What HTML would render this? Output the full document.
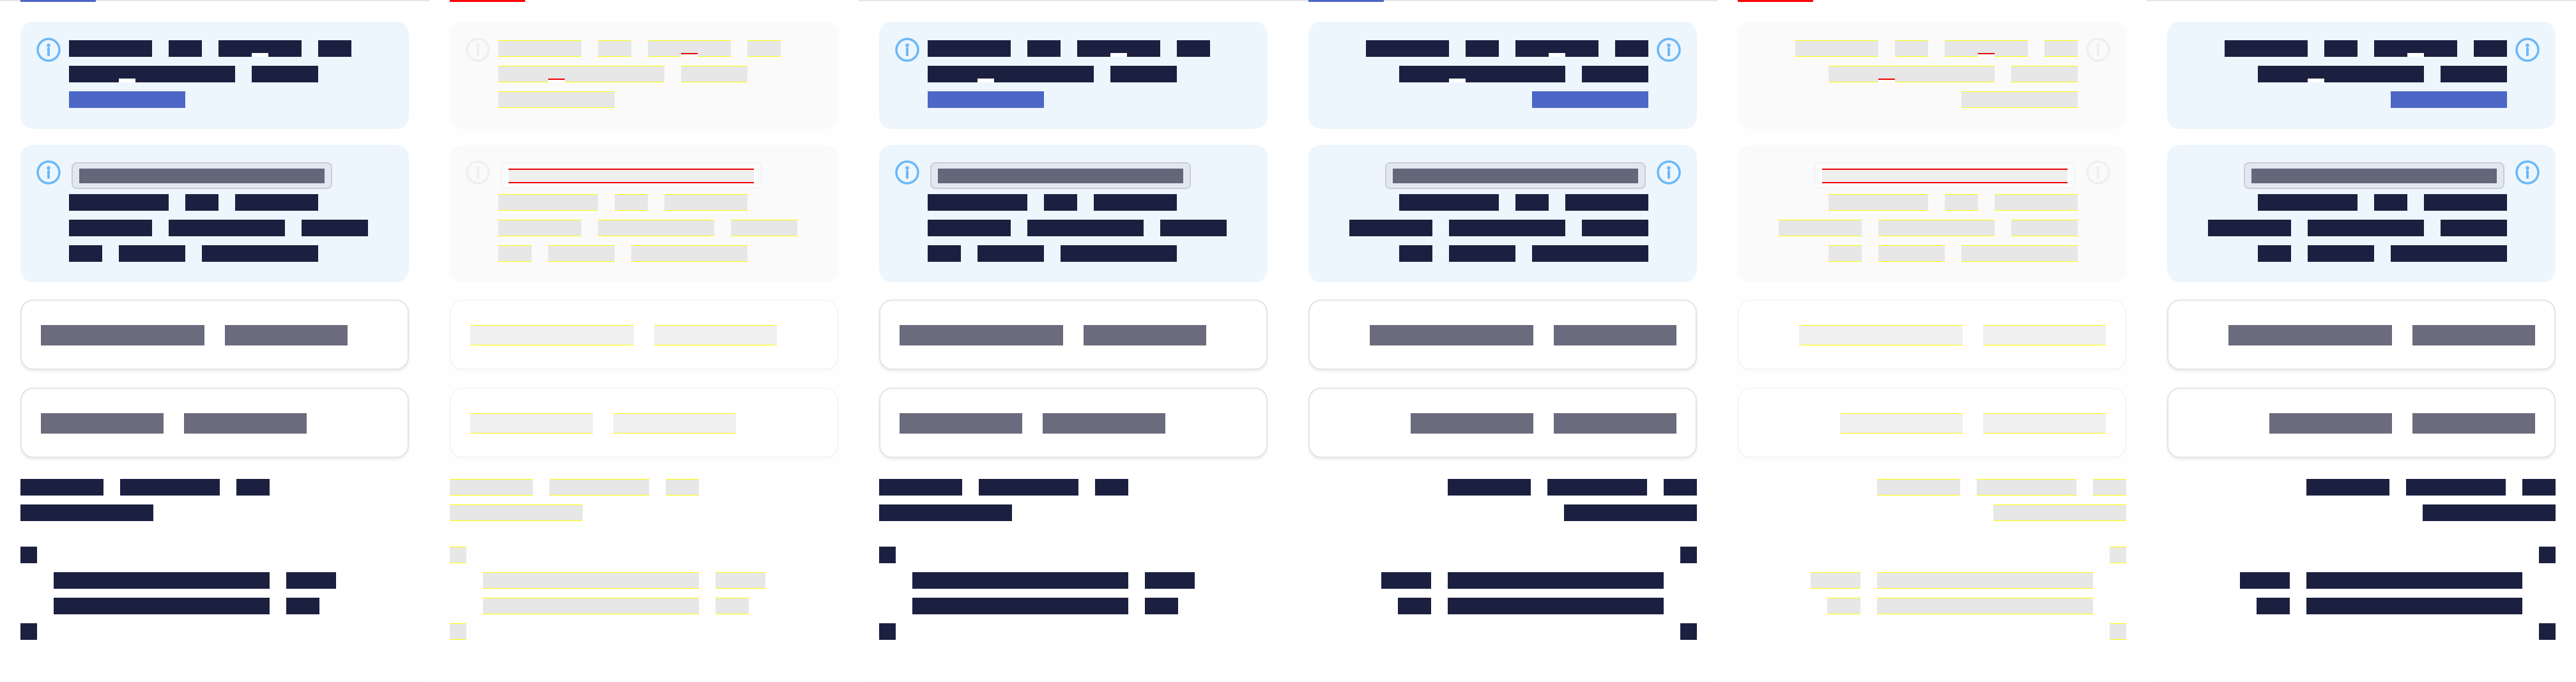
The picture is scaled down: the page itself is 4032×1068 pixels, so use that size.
<!DOCTYPE html>
<html><head><meta charset="utf-8"><style>
*{margin:0;padding:0;box-sizing:border-box}
body{width:4032px;height:1068px;background:#fff;position:relative;overflow:hidden;font-family:"Liberation Sans",sans-serif}
.p{position:absolute;top:0;width:672px;height:1068px;background:#fff;border-top:2px solid #e6e6e6}
.tab{position:absolute;left:32px;top:-2px;width:118px;height:3px;background:#4c67c6}
.box{position:absolute;left:32px;width:608px;background:#edf5fd;border-radius:20px}
.card{position:absolute;left:32px;width:608px;height:110px;background:#fff;border:2px solid #e4e4e4;border-radius:20px;box-shadow:0 3px 4px rgba(0,0,0,.08)}
.ic{position:absolute;left:57px;width:38px;height:38px}
.ln{position:absolute;left:var(--x);display:flex;gap:26px;height:26px}
.rtl .ln{left:auto;right:var(--x)}
.rtl .ln.rv{flex-direction:row-reverse}
.rtl .ic{left:auto;right:57px}
.b{display:block;height:26px;background:#1c2040}
.n{display:block;height:26px;width:26px;background:linear-gradient(#1c2040 0 20px,#fff 20px)}
.w{display:flex}
.bl{background:#4c67c6}
.pill{position:absolute;left:112px;top:252px;width:408px;height:42px;background:#e3e7ef;border:2px solid #c9cdd7;border-radius:8px}
.rtl .pill{left:auto;right:112px}
.pill i{position:absolute;left:10px;top:8px;width:384px;height:23px;background:#636779}
.cl{position:absolute;left:var(--x);display:flex;gap:32px}
.rtl .cl{left:auto;right:var(--x)}
.cb{display:block;height:32px;background:#6b6b7d}
.cs{stroke:#6ab8f7;fill:#6ab8f7}
.f{background:#fefefe;border-top:2px solid #fff}
.f .tab{background:#f00}
.f .box{background:#fafafa}
.f .b,.f .bl{background:#e7e7e7;border-top:1px solid #ff0;border-bottom:1px solid #ff0}
.f .n{background:linear-gradient(#e7e7e7 0 19px,#e00 19px 21px,#fdfdfd 21px);border-top:1px solid #ff0}
.f .pill{background:#fbfbfb;border-color:#f3f3f3}
.f .pill i{background:#efefef;border-top:2px solid #e00;border-bottom:2px solid #e00}
.f .card{border-color:#f6f6f6;box-shadow:0 3px 4px rgba(0,0,0,.02)}
.f .cb{background:#f0f0f0;border-top:1px solid #ff0;border-bottom:1px solid #ff0}
.f .cs{stroke:#efefef;fill:#efefef}
</style></head><body>

<div class="p" style="left:0">
<div class="tab"></div>
<div class="box" style="top:32px;height:168px"></div>
<svg class="ic" style="top:57px" viewBox="-19 -19 38 38"><circle class="cs" r="17" fill="none" stroke-width="3.5" style="fill:none"/><circle class="cs" cy="-7" r="2.4" stroke="none"/><line class="cs" y1="-2" y2="8" stroke-width="4" stroke-linecap="round"/></svg>
<div class="ln" style="--x:108px;top:61px"><i class="b" style="width:130px"></i><i class="b" style="width:52px"></i><span class="w"><i class="b" style="width:52px"></i><i class="n"></i><i class="b" style="width:52px"></i></span><i class="b" style="width:52px"></i></div>
<div class="ln" style="--x:108px;top:101px"><span class="w"><i class="b" style="width:78px"></i><i class="n"></i><i class="b" style="width:156px"></i></span><i class="b" style="width:104px"></i></div>
<div class="ln" style="--x:108px;top:141px"><i class="b bl" style="width:182px"></i></div>
<div class="box" style="top:225px;height:215px"></div>
<svg class="ic" style="top:249px" viewBox="-19 -19 38 38"><circle class="cs" r="17" fill="none" stroke-width="3.5" style="fill:none"/><circle class="cs" cy="-7" r="2.4" stroke="none"/><line class="cs" y1="-2" y2="8" stroke-width="4" stroke-linecap="round"/></svg>
<div class="pill"><i></i></div>
<div class="ln" style="--x:108px;top:302px"><i class="b" style="width:156px"></i><i class="b" style="width:52px"></i><i class="b" style="width:130px"></i></div>
<div class="ln" style="--x:108px;top:342px"><i class="b" style="width:130px"></i><i class="b" style="width:182px"></i><i class="b" style="width:104px"></i></div>
<div class="ln" style="--x:108px;top:382px"><i class="b" style="width:52px"></i><i class="b" style="width:104px"></i><i class="b" style="width:182px"></i></div>
<div class="card" style="top:467px"></div>
<div class="cl" style="--x:64px;top:507px"><i class="cb" style="width:256px"></i><i class="cb" style="width:192px"></i></div>
<div class="card" style="top:605px"></div>
<div class="cl" style="--x:64px;top:645px"><i class="cb" style="width:192px"></i><i class="cb" style="width:192px"></i></div>
<div class="ln" style="--x:32px;top:748px"><i class="b" style="width:130px"></i><i class="b" style="width:156px"></i><i class="b" style="width:52px"></i></div>
<div class="ln" style="--x:32px;top:788px"><i class="b" style="width:208px"></i></div>
<div class="ln" style="--x:32px;top:854px"><i class="b" style="width:26px"></i></div>
<div class="ln rv" style="--x:84px;top:894px"><i class="b" style="width:338px"></i><i class="b" style="width:78px"></i></div>
<div class="ln rv" style="--x:84px;top:934px"><i class="b" style="width:338px"></i><i class="b" style="width:52px"></i></div>
<div class="ln" style="--x:32px;top:974px"><i class="b" style="width:26px"></i></div>
</div>

<div class="p f" style="left:672px">
<div class="tab"></div>
<div class="box" style="top:32px;height:168px"></div>
<svg class="ic" style="top:57px" viewBox="-19 -19 38 38"><circle class="cs" r="17" fill="none" stroke-width="3.5" style="fill:none"/><circle class="cs" cy="-7" r="2.4" stroke="none"/><line class="cs" y1="-2" y2="8" stroke-width="4" stroke-linecap="round"/></svg>
<div class="ln" style="--x:108px;top:61px"><i class="b" style="width:130px"></i><i class="b" style="width:52px"></i><span class="w"><i class="b" style="width:52px"></i><i class="n"></i><i class="b" style="width:52px"></i></span><i class="b" style="width:52px"></i></div>
<div class="ln" style="--x:108px;top:101px"><span class="w"><i class="b" style="width:78px"></i><i class="n"></i><i class="b" style="width:156px"></i></span><i class="b" style="width:104px"></i></div>
<div class="ln" style="--x:108px;top:141px"><i class="b bl" style="width:182px"></i></div>
<div class="box" style="top:225px;height:215px"></div>
<svg class="ic" style="top:249px" viewBox="-19 -19 38 38"><circle class="cs" r="17" fill="none" stroke-width="3.5" style="fill:none"/><circle class="cs" cy="-7" r="2.4" stroke="none"/><line class="cs" y1="-2" y2="8" stroke-width="4" stroke-linecap="round"/></svg>
<div class="pill"><i></i></div>
<div class="ln" style="--x:108px;top:302px"><i class="b" style="width:156px"></i><i class="b" style="width:52px"></i><i class="b" style="width:130px"></i></div>
<div class="ln" style="--x:108px;top:342px"><i class="b" style="width:130px"></i><i class="b" style="width:182px"></i><i class="b" style="width:104px"></i></div>
<div class="ln" style="--x:108px;top:382px"><i class="b" style="width:52px"></i><i class="b" style="width:104px"></i><i class="b" style="width:182px"></i></div>
<div class="card" style="top:467px"></div>
<div class="cl" style="--x:64px;top:507px"><i class="cb" style="width:256px"></i><i class="cb" style="width:192px"></i></div>
<div class="card" style="top:605px"></div>
<div class="cl" style="--x:64px;top:645px"><i class="cb" style="width:192px"></i><i class="cb" style="width:192px"></i></div>
<div class="ln" style="--x:32px;top:748px"><i class="b" style="width:130px"></i><i class="b" style="width:156px"></i><i class="b" style="width:52px"></i></div>
<div class="ln" style="--x:32px;top:788px"><i class="b" style="width:208px"></i></div>
<div class="ln" style="--x:32px;top:854px"><i class="b" style="width:26px"></i></div>
<div class="ln rv" style="--x:84px;top:894px"><i class="b" style="width:338px"></i><i class="b" style="width:78px"></i></div>
<div class="ln rv" style="--x:84px;top:934px"><i class="b" style="width:338px"></i><i class="b" style="width:52px"></i></div>
<div class="ln" style="--x:32px;top:974px"><i class="b" style="width:26px"></i></div>
</div>

<div class="p" style="left:1344px">
<div class="box" style="top:32px;height:168px"></div>
<svg class="ic" style="top:57px" viewBox="-19 -19 38 38"><circle class="cs" r="17" fill="none" stroke-width="3.5" style="fill:none"/><circle class="cs" cy="-7" r="2.4" stroke="none"/><line class="cs" y1="-2" y2="8" stroke-width="4" stroke-linecap="round"/></svg>
<div class="ln" style="--x:108px;top:61px"><i class="b" style="width:130px"></i><i class="b" style="width:52px"></i><span class="w"><i class="b" style="width:52px"></i><i class="n"></i><i class="b" style="width:52px"></i></span><i class="b" style="width:52px"></i></div>
<div class="ln" style="--x:108px;top:101px"><span class="w"><i class="b" style="width:78px"></i><i class="n"></i><i class="b" style="width:156px"></i></span><i class="b" style="width:104px"></i></div>
<div class="ln" style="--x:108px;top:141px"><i class="b bl" style="width:182px"></i></div>
<div class="box" style="top:225px;height:215px"></div>
<svg class="ic" style="top:249px" viewBox="-19 -19 38 38"><circle class="cs" r="17" fill="none" stroke-width="3.5" style="fill:none"/><circle class="cs" cy="-7" r="2.4" stroke="none"/><line class="cs" y1="-2" y2="8" stroke-width="4" stroke-linecap="round"/></svg>
<div class="pill"><i></i></div>
<div class="ln" style="--x:108px;top:302px"><i class="b" style="width:156px"></i><i class="b" style="width:52px"></i><i class="b" style="width:130px"></i></div>
<div class="ln" style="--x:108px;top:342px"><i class="b" style="width:130px"></i><i class="b" style="width:182px"></i><i class="b" style="width:104px"></i></div>
<div class="ln" style="--x:108px;top:382px"><i class="b" style="width:52px"></i><i class="b" style="width:104px"></i><i class="b" style="width:182px"></i></div>
<div class="card" style="top:467px"></div>
<div class="cl" style="--x:64px;top:507px"><i class="cb" style="width:256px"></i><i class="cb" style="width:192px"></i></div>
<div class="card" style="top:605px"></div>
<div class="cl" style="--x:64px;top:645px"><i class="cb" style="width:192px"></i><i class="cb" style="width:192px"></i></div>
<div class="ln" style="--x:32px;top:748px"><i class="b" style="width:130px"></i><i class="b" style="width:156px"></i><i class="b" style="width:52px"></i></div>
<div class="ln" style="--x:32px;top:788px"><i class="b" style="width:208px"></i></div>
<div class="ln" style="--x:32px;top:854px"><i class="b" style="width:26px"></i></div>
<div class="ln rv" style="--x:84px;top:894px"><i class="b" style="width:338px"></i><i class="b" style="width:78px"></i></div>
<div class="ln rv" style="--x:84px;top:934px"><i class="b" style="width:338px"></i><i class="b" style="width:52px"></i></div>
<div class="ln" style="--x:32px;top:974px"><i class="b" style="width:26px"></i></div>
</div>

<div class="p rtl" style="left:2016px">
<div class="tab"></div>
<div class="box" style="top:32px;height:168px"></div>
<svg class="ic" style="top:57px" viewBox="-19 -19 38 38"><circle class="cs" r="17" fill="none" stroke-width="3.5" style="fill:none"/><circle class="cs" cy="-7" r="2.4" stroke="none"/><line class="cs" y1="-2" y2="8" stroke-width="4" stroke-linecap="round"/></svg>
<div class="ln" style="--x:108px;top:61px"><i class="b" style="width:130px"></i><i class="b" style="width:52px"></i><span class="w"><i class="b" style="width:52px"></i><i class="n"></i><i class="b" style="width:52px"></i></span><i class="b" style="width:52px"></i></div>
<div class="ln" style="--x:108px;top:101px"><span class="w"><i class="b" style="width:78px"></i><i class="n"></i><i class="b" style="width:156px"></i></span><i class="b" style="width:104px"></i></div>
<div class="ln" style="--x:108px;top:141px"><i class="b bl" style="width:182px"></i></div>
<div class="box" style="top:225px;height:215px"></div>
<svg class="ic" style="top:249px" viewBox="-19 -19 38 38"><circle class="cs" r="17" fill="none" stroke-width="3.5" style="fill:none"/><circle class="cs" cy="-7" r="2.4" stroke="none"/><line class="cs" y1="-2" y2="8" stroke-width="4" stroke-linecap="round"/></svg>
<div class="pill"><i></i></div>
<div class="ln" style="--x:108px;top:302px"><i class="b" style="width:156px"></i><i class="b" style="width:52px"></i><i class="b" style="width:130px"></i></div>
<div class="ln" style="--x:108px;top:342px"><i class="b" style="width:130px"></i><i class="b" style="width:182px"></i><i class="b" style="width:104px"></i></div>
<div class="ln" style="--x:108px;top:382px"><i class="b" style="width:52px"></i><i class="b" style="width:104px"></i><i class="b" style="width:182px"></i></div>
<div class="card" style="top:467px"></div>
<div class="cl" style="--x:64px;top:507px"><i class="cb" style="width:256px"></i><i class="cb" style="width:192px"></i></div>
<div class="card" style="top:605px"></div>
<div class="cl" style="--x:64px;top:645px"><i class="cb" style="width:192px"></i><i class="cb" style="width:192px"></i></div>
<div class="ln" style="--x:32px;top:748px"><i class="b" style="width:130px"></i><i class="b" style="width:156px"></i><i class="b" style="width:52px"></i></div>
<div class="ln" style="--x:32px;top:788px"><i class="b" style="width:208px"></i></div>
<div class="ln" style="--x:32px;top:854px"><i class="b" style="width:26px"></i></div>
<div class="ln rv" style="--x:84px;top:894px"><i class="b" style="width:338px"></i><i class="b" style="width:78px"></i></div>
<div class="ln rv" style="--x:84px;top:934px"><i class="b" style="width:338px"></i><i class="b" style="width:52px"></i></div>
<div class="ln" style="--x:32px;top:974px"><i class="b" style="width:26px"></i></div>
</div>

<div class="p f rtl" style="left:2688px">
<div class="tab"></div>
<div class="box" style="top:32px;height:168px"></div>
<svg class="ic" style="top:57px" viewBox="-19 -19 38 38"><circle class="cs" r="17" fill="none" stroke-width="3.5" style="fill:none"/><circle class="cs" cy="-7" r="2.4" stroke="none"/><line class="cs" y1="-2" y2="8" stroke-width="4" stroke-linecap="round"/></svg>
<div class="ln" style="--x:108px;top:61px"><i class="b" style="width:130px"></i><i class="b" style="width:52px"></i><span class="w"><i class="b" style="width:52px"></i><i class="n"></i><i class="b" style="width:52px"></i></span><i class="b" style="width:52px"></i></div>
<div class="ln" style="--x:108px;top:101px"><span class="w"><i class="b" style="width:78px"></i><i class="n"></i><i class="b" style="width:156px"></i></span><i class="b" style="width:104px"></i></div>
<div class="ln" style="--x:108px;top:141px"><i class="b bl" style="width:182px"></i></div>
<div class="box" style="top:225px;height:215px"></div>
<svg class="ic" style="top:249px" viewBox="-19 -19 38 38"><circle class="cs" r="17" fill="none" stroke-width="3.5" style="fill:none"/><circle class="cs" cy="-7" r="2.4" stroke="none"/><line class="cs" y1="-2" y2="8" stroke-width="4" stroke-linecap="round"/></svg>
<div class="pill"><i></i></div>
<div class="ln" style="--x:108px;top:302px"><i class="b" style="width:156px"></i><i class="b" style="width:52px"></i><i class="b" style="width:130px"></i></div>
<div class="ln" style="--x:108px;top:342px"><i class="b" style="width:130px"></i><i class="b" style="width:182px"></i><i class="b" style="width:104px"></i></div>
<div class="ln" style="--x:108px;top:382px"><i class="b" style="width:52px"></i><i class="b" style="width:104px"></i><i class="b" style="width:182px"></i></div>
<div class="card" style="top:467px"></div>
<div class="cl" style="--x:64px;top:507px"><i class="cb" style="width:256px"></i><i class="cb" style="width:192px"></i></div>
<div class="card" style="top:605px"></div>
<div class="cl" style="--x:64px;top:645px"><i class="cb" style="width:192px"></i><i class="cb" style="width:192px"></i></div>
<div class="ln" style="--x:32px;top:748px"><i class="b" style="width:130px"></i><i class="b" style="width:156px"></i><i class="b" style="width:52px"></i></div>
<div class="ln" style="--x:32px;top:788px"><i class="b" style="width:208px"></i></div>
<div class="ln" style="--x:32px;top:854px"><i class="b" style="width:26px"></i></div>
<div class="ln rv" style="--x:84px;top:894px"><i class="b" style="width:338px"></i><i class="b" style="width:78px"></i></div>
<div class="ln rv" style="--x:84px;top:934px"><i class="b" style="width:338px"></i><i class="b" style="width:52px"></i></div>
<div class="ln" style="--x:32px;top:974px"><i class="b" style="width:26px"></i></div>
</div>

<div class="p rtl" style="left:3360px">
<div class="box" style="top:32px;height:168px"></div>
<svg class="ic" style="top:57px" viewBox="-19 -19 38 38"><circle class="cs" r="17" fill="none" stroke-width="3.5" style="fill:none"/><circle class="cs" cy="-7" r="2.4" stroke="none"/><line class="cs" y1="-2" y2="8" stroke-width="4" stroke-linecap="round"/></svg>
<div class="ln" style="--x:108px;top:61px"><i class="b" style="width:130px"></i><i class="b" style="width:52px"></i><span class="w"><i class="b" style="width:52px"></i><i class="n"></i><i class="b" style="width:52px"></i></span><i class="b" style="width:52px"></i></div>
<div class="ln" style="--x:108px;top:101px"><span class="w"><i class="b" style="width:78px"></i><i class="n"></i><i class="b" style="width:156px"></i></span><i class="b" style="width:104px"></i></div>
<div class="ln" style="--x:108px;top:141px"><i class="b bl" style="width:182px"></i></div>
<div class="box" style="top:225px;height:215px"></div>
<svg class="ic" style="top:249px" viewBox="-19 -19 38 38"><circle class="cs" r="17" fill="none" stroke-width="3.5" style="fill:none"/><circle class="cs" cy="-7" r="2.4" stroke="none"/><line class="cs" y1="-2" y2="8" stroke-width="4" stroke-linecap="round"/></svg>
<div class="pill"><i></i></div>
<div class="ln" style="--x:108px;top:302px"><i class="b" style="width:156px"></i><i class="b" style="width:52px"></i><i class="b" style="width:130px"></i></div>
<div class="ln" style="--x:108px;top:342px"><i class="b" style="width:130px"></i><i class="b" style="width:182px"></i><i class="b" style="width:104px"></i></div>
<div class="ln" style="--x:108px;top:382px"><i class="b" style="width:52px"></i><i class="b" style="width:104px"></i><i class="b" style="width:182px"></i></div>
<div class="card" style="top:467px"></div>
<div class="cl" style="--x:64px;top:507px"><i class="cb" style="width:256px"></i><i class="cb" style="width:192px"></i></div>
<div class="card" style="top:605px"></div>
<div class="cl" style="--x:64px;top:645px"><i class="cb" style="width:192px"></i><i class="cb" style="width:192px"></i></div>
<div class="ln" style="--x:32px;top:748px"><i class="b" style="width:130px"></i><i class="b" style="width:156px"></i><i class="b" style="width:52px"></i></div>
<div class="ln" style="--x:32px;top:788px"><i class="b" style="width:208px"></i></div>
<div class="ln" style="--x:32px;top:854px"><i class="b" style="width:26px"></i></div>
<div class="ln rv" style="--x:84px;top:894px"><i class="b" style="width:338px"></i><i class="b" style="width:78px"></i></div>
<div class="ln rv" style="--x:84px;top:934px"><i class="b" style="width:338px"></i><i class="b" style="width:52px"></i></div>
<div class="ln" style="--x:32px;top:974px"><i class="b" style="width:26px"></i></div>
</div>

</body></html>
